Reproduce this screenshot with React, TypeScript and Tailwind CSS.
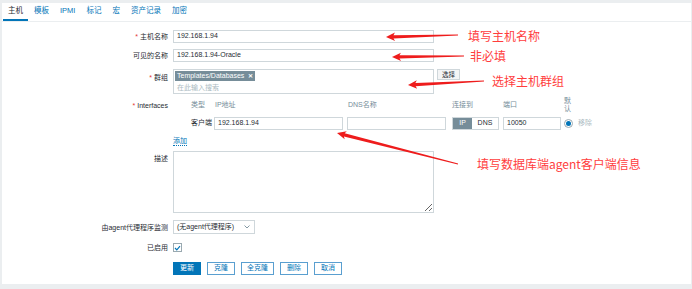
import React from 'react';

const FONT = { fontFamily: '"Liberation Sans", "Noto Sans CJK SC", sans-serif' };
const NOTE_FONT = { fontFamily: '"Noto Sans CJK SC", sans-serif' };

const TABS = ['主机', '模板', 'IPMI', '标记', '宏', '资产记录', '加密'];

// red annotation arrows: tip x/y, tail x/y
const ARROWS = [
    [386, 37, 458, 35],
    [392, 57, 464, 56],
    [408, 85, 484, 81],
    [337, 133, 458, 164],
];

function arrowPoints(tx: number, ty: number, sx: number, sy: number) {
    const dx = sx - tx;
    const dy = sy - ty;
    const len = Math.hypot(dx, dy);
    const ux = dx / len;
    const uy = dy / len;
    const nx = -uy;
    const ny = ux;
    const hl = 9, hw = 4.2, sw = 1.6, tw = 0.4;
    const bx = tx + ux * hl;
    const by = ty + uy * hl;
    const jx = tx + ux * (hl - 1.5);
    const jy = ty + uy * (hl - 1.5);
    const pts = [
        [tx, ty],
        [bx + nx * hw, by + ny * hw],
        [jx + nx * sw, jy + ny * sw],
        [sx + nx * tw, sy + ny * tw],
        [sx - nx * tw, sy - ny * tw],
        [jx - nx * sw, jy - ny * sw],
        [bx - nx * hw, by - ny * hw],
    ];
    return pts.map(p => `${p[0].toFixed(1)},${p[1].toFixed(1)}`).join(' ');
}

function Label({ children, required }: { children: React.ReactNode; required?: boolean }) {
    return (
        <div className="w-[166px] shrink-0 text-right text-[7px] leading-[9px] text-[#1f2c33]">
            {required && <span className="text-[#e33734] mr-[2px]">*</span>}
            {children}
        </div>
    );
}

function TextBox({ value, w }: { value?: string; w: string }) {
    return (
        <div className={`${w} h-[13px] border border-[#cfd7db] bg-white flex items-center px-[3px] text-[7px] text-[#1f2c33]`}>
            {value}
        </div>
    );
}

export default function App() {
    return (
        <div className="relative w-[692px] h-[289px] bg-[#ebeef0] pt-[3px] pl-[2px] pr-[1px] pb-[5px] overflow-hidden" style={FONT}>
            <div className="bg-white h-full">
                {/* Tabs */}
                <div className="h-[19px] border-b border-[#ebeef0] flex pl-[1px]">
                    {TABS.map((t, i) => (
                        <div
                            key={t}
                            className={`px-[5px] mr-[1px] flex items-center text-[7.5px] ${i === 0 ? 'text-[#1f2c33] border-b-2 border-[#0275b8]' : 'text-[#0275b8] border-b-2 border-transparent'}`}
                        >
                            {t}
                        </div>
                    ))}
                </div>

                <div className="flex flex-col pt-[8px]">
                    {/* 主机名称 */}
                    <div className="flex items-center gap-[5px]">
                        <Label required>主机名称</Label>
                        <TextBox value="192.168.1.94" w="w-[261px]" />
                    </div>

                    {/* 可见的名称 */}
                    <div className="flex items-center gap-[5px] mt-[6px]">
                        <Label>可见的名称</Label>
                        <TextBox value="192.168.1.94-Oracle" w="w-[261px]" />
                    </div>

                    {/* 群组 */}
                    <div className="flex items-start gap-[5px] mt-[7px]">
                        <div className="pt-[4px]"><Label required>群组</Label></div>
                        <div className="w-[261px] h-[25px] border border-[#cfd7db] px-[1px] pt-[1px] flex flex-col items-start">
                            <div className="flex items-center h-[10px] bg-[#768d99] text-white text-[7px] leading-[10px] px-[2px] gap-[4px]">
                                <span>Templates/Databases</span>
                                <span className="text-[6px] font-bold">✕</span>
                            </div>
                            <div className="text-[7px] leading-[9px] text-[#acbbc2] mt-[2px] pl-[2px]">在此输入搜索</div>
                        </div>
                        <div className="ml-[-2px] h-[11px] px-[4px] border border-[#cfd7db] bg-[#f4f5f6] text-[6.5px] text-[#1f2c33] flex items-center">选择</div>
                    </div>

                    {/* Interfaces */}
                    <div className="flex items-center gap-[5px] mt-[2px] h-[18px]">
                        <Label required>Interfaces</Label>
                        <div className="flex items-center text-[7px] text-[#768d99]">
                            <div className="w-[41px] pl-[18px]">类型</div>
                            <div className="w-[133px] pl-[1px]">IP地址</div>
                            <div className="w-[105px] pl-[1px]">DNS名称</div>
                            <div className="w-[51px]">连接到</div>
                            <div className="w-[61px]">端口</div>
                            <div className="w-[8px] leading-[8px]">默认</div>
                        </div>
                    </div>
                    <div className="flex items-center gap-[5px] mt-[3px]">
                        <div className="w-[166px] shrink-0" />
                        <div className="flex items-center text-[7px] text-[#1f2c33]">
                            <div className="w-[41px] pl-[18px]">客户端</div>
                            <TextBox value="192.168.1.94" w="w-[129px]" />
                            <div className="w-[4px]" />
                            <TextBox w="w-[99px]" />
                            <div className="w-[6px]" />
                            <div className="flex h-[13px] w-[47px] border border-[#cfd7db]">
                                <div className="w-[19px] bg-[#768d99] text-white flex items-center justify-center">IP</div>
                                <div className="flex-1 flex items-center justify-center">DNS</div>
                            </div>
                            <div className="w-[4px]" />
                            <TextBox value="10050" w="w-[58px]" />
                            <div className="w-[3px]" />
                            <div className="w-[9px] h-[9px] rounded-full border border-[#9aa9b0] flex items-center justify-center">
                                <div className="w-[5px] h-[5px] rounded-full bg-[#0275b8]" />
                            </div>
                            <div className="ml-[5px] text-[#acbbc2]">移除</div>
                        </div>
                    </div>

                    {/* 添加 */}
                    <div className="flex items-center gap-[5px] mt-[6px] h-[10px]">
                        <div className="w-[166px] shrink-0" />
                        <span className="text-[7px] text-[#0275b8] border-b border-dotted border-[#0275b8] leading-[8px]">添加</span>
                    </div>

                    {/* 描述 */}
                    <div className="flex items-start gap-[5px] mt-[5px]">
                        <div className="pt-[3px]"><Label>描述</Label></div>
                        <textarea readOnly className="w-[261px] h-[62px] border border-[#cfd7db] bg-white outline-none resize" />
                    </div>

                    {/* 由agent代理程序监测 */}
                    <div className="flex items-center gap-[5px] mt-[7px]">
                        <Label>由agent代理程序监测</Label>
                        <div className="w-[82px] h-[14px] border border-[#cfd7db] flex items-center justify-between pl-[3px] pr-[4px] text-[7px] text-[#1f2c33]">
                            <span>(无agent代理程序)</span>
                            <svg width="6" height="4" viewBox="0 0 6 4"><path d="M0.5 0.5 L3 3 L5.5 0.5" fill="none" stroke="#768d99" strokeWidth="0.9" /></svg>
                        </div>
                    </div>

                    {/* 已启用 */}
                    <div className="flex items-center gap-[5px] mt-[9px]">
                        <Label>已启用</Label>
                        <div className="w-[9px] h-[9px] border border-[#9aa9b0] flex items-center justify-center">
                            <svg width="7" height="6" viewBox="0 0 7 6"><path d="M1 3 L2.8 4.8 L6 1.2" fill="none" stroke="#0275b8" strokeWidth="1.2" /></svg>
                        </div>
                    </div>

                    {/* Buttons */}
                    <div className="flex items-center gap-[5px] mt-[10px]">
                        <div className="w-[166px] shrink-0" />
                        <div className="flex items-center gap-[6px] text-[7px]">
                            <div className="h-[13px] w-[28px] bg-[#0275b8] text-white flex items-center justify-center">更新</div>
                            <div className="h-[13px] w-[28px] border border-[#5a9fd0] text-[#0275b8] flex items-center justify-center">克隆</div>
                            <div className="h-[13px] w-[33px] border border-[#5a9fd0] text-[#0275b8] flex items-center justify-center">全克隆</div>
                            <div className="h-[13px] w-[28px] border border-[#5a9fd0] text-[#0275b8] flex items-center justify-center">删除</div>
                            <div className="h-[13px] w-[28px] border border-[#5a9fd0] text-[#0275b8] flex items-center justify-center">取消</div>
                        </div>
                    </div>
                </div>
            </div>

            {/* Annotations */}
            <svg className="absolute inset-0 pointer-events-none" width="692" height="289">
                {ARROWS.map((a, i) => (
                    <polygon key={i} points={arrowPoints(a[0], a[1], a[2], a[3])} fill="#ee1c1c" />
                ))}
            </svg>
            <div className="absolute left-[468px] top-[28px] text-[12px] leading-[15px] text-[#ff3d3d]" style={NOTE_FONT}>填写主机名称</div>
            <div className="absolute left-[470px] top-[48px] text-[12px] leading-[15px] text-[#ff3d3d]" style={NOTE_FONT}>非必填</div>
            <div className="absolute left-[492px] top-[73px] text-[12px] leading-[15px] text-[#ff3d3d]" style={NOTE_FONT}>选择主机群组</div>
            <div className="absolute left-[477px] top-[156px] text-[12px] leading-[15px] text-[#ff3d3d]" style={NOTE_FONT}>填写数据库端agent客户端信息</div>
        </div>
    );
}
